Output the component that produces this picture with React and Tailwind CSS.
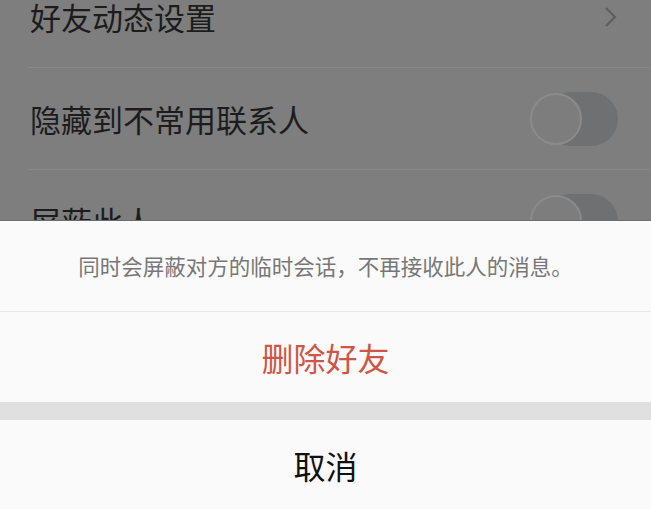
import React from "react";

const font = { fontFamily: '"Noto Sans CJK SC", "Noto Sans", sans-serif' };

function Toggle() {
  return (
    <div className="relative w-[88px] h-[54px]">
      <div className="absolute left-[14px] right-0 top-0 bottom-0 rounded-full bg-[#6f7072]" />
      <div className="absolute left-0 top-[1px] w-[52px] h-[52px] rounded-full bg-[#7d7d7d] border-2 border-[#8b8b8b]" />
    </div>
  );
}

function Row({ label, right }) {
  return (
    <div className="ml-[28px] h-[102px] flex items-center justify-between pl-[2px] pr-[33px] border-b border-[#8a8a8a]">
      <span className="text-[31px] leading-none text-[#1c1c1c]">{label}</span>
      {right}
    </div>
  );
}

export default function App() {
  return (
    <div className="relative w-[651px] h-[521px] overflow-hidden bg-[#7e7e7e]" style={font}>
      <div className="-mt-[34px]">
        <Row
          label="好友动态设置"
          right={
            <svg width="16" height="22" viewBox="0 0 16 22" className="mr-[-1px]">
              <path d="M3 2 L12 11 L3 20" fill="none" stroke="#5f5f5f" strokeWidth="2.2" />
            </svg>
          }
        />
        <Row label="隐藏到不常用联系人" right={<Toggle />} />
        <Row label="屏蔽此人" right={<Toggle />} />
      </div>

      <div className="absolute left-0 right-0 bottom-0 h-[301px] flex flex-col bg-[#fafafa] border-t border-[#6c6c6c]">
        <div className="h-[91px] flex items-center justify-center border-b border-[#e8e8e8]">
          <span className="text-[21.5px] text-[#777777] leading-none">同时会屏蔽对方的临时会话，不再接收此人的消息。</span>
        </div>
        <div className="h-[90px] flex items-center justify-center">
          <span className="text-[32px] text-[#cf5646] leading-none">删除好友</span>
        </div>
        <div className="h-[18px] bg-[#e0e0e0]" />
        <div className="h-[89px] flex items-center justify-center">
          <span className="text-[32px] text-[#111111] leading-none">取消</span>
        </div>
        <div className="flex-1 bg-white" />
      </div>
    </div>
  );
}
